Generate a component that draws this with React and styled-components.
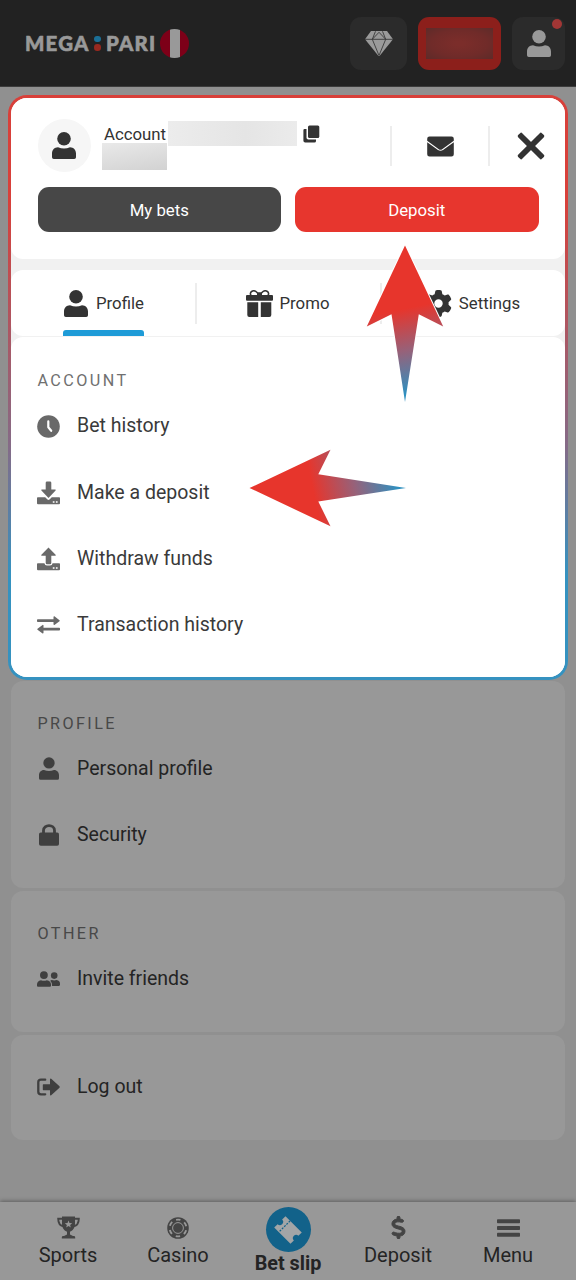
import React from "react";
import styled, { createGlobalStyle } from "styled-components";
import { FaGear, FaDollarSign } from "react-icons/fa6";

//Icons

const UserIcon = ({ w = 24, h = 27 }) => (
    <svg width={w} height={h} viewBox="0 0 24 27" fill="currentColor">
        <circle cx="12" cy="6.8" r="6.8" />
        <path d="M6 15.2C8 16 10 16.4 12 16.4S16 16 18 15.2C21.6 15.2 24 18 24 21.4V25.2A1.8 1.8 0 0 1 22.2 27H1.8A1.8 1.8 0 0 1 0 25.2V21.4C0 18 2.4 15.2 6 15.2Z" />
    </svg>
);

const GemIcon = () => (
    <svg width="28" height="25" viewBox="0 0 28 25">
        <path d="M6 0H22L28 8.2L14.5 25H13.5L0 8.2Z" fill="#9a9a9a" />
        <path
            d="M0 8.3H28M10.5 0.3L7.3 8.3L14 24.5L20.7 8.3L17.5 0.3M7.3 8.3L14 1.3L20.7 8.3"
            fill="none"
            stroke="#3a3a3a"
            strokeWidth="0.9"
        />
    </svg>
);

const CopyIcon = () => (
    <svg width="17" height="18" viewBox="0 0 17 18" fill="#333">
        <rect x="5" y="0.5" width="11.3" height="12.5" rx="1.5" />
        <path d="M1.6 4H3.5V12.8A1.8 1.8 0 0 0 5.3 14.6H13V16A1.6 1.6 0 0 1 11.4 17.6H2.2A1.8 1.8 0 0 1 0.4 15.8V5.2A1.2 1.2 0 0 1 1.6 4Z" />
    </svg>
);

const MailIcon = () => (
    <svg width="27" height="21" viewBox="0 0 27 21" fill="#333">
        <path d="M2.5 0.5H24.5A2.3 2.3 0 0 1 26.8 2.8V4.7L15.2 13.2C14.2 14 12.8 14 11.8 13.2L0.2 4.7V2.8A2.3 2.3 0 0 1 2.5 0.5Z" />
        <path d="M0.2 6.2L11 14C12.5 15.1 14.5 15.1 16 14L26.8 6.2V18.2A2.3 2.3 0 0 1 24.5 20.5H2.5A2.3 2.3 0 0 1 0.2 18.2Z" />
    </svg>
);

const CloseIcon = () => (
    <svg width="28" height="28" viewBox="0 0 28 28" fill="#333">
        <g transform="rotate(45 14 14)">
            <rect x="-2.8" y="11.1" width="33.6" height="5.8" rx="1.5" />
            <rect x="11.1" y="-2.8" width="5.8" height="33.6" rx="1.5" />
        </g>
    </svg>
);

const GiftIcon = () => (
    <svg width="27" height="27" viewBox="0 0 27 27" fill="#333">
        <rect x="0" y="4.9" width="27" height="5.8" rx="1" />
        <path d="M1.3 12.2H12.2V27H3.3A2 2 0 0 1 1.3 25ZM14.8 12.2H25.3V25A2 2 0 0 1 23.3 27H14.8Z" />
        <path
            d="M12.8 5.3C11.5 1.5 8.3 0 6 1.2C3.8 2.5 4 5 5.5 6M14.2 5.3C15.5 1.5 18.7 0 21 1.2C23.2 2.5 23 5 21.5 6"
            fill="none"
            stroke="#333"
            strokeWidth="1.6"
        />
        <rect x="11" y="2.2" width="5" height="4" rx="1.5" />
    </svg>
);

const ClockIcon = () => (
    <svg width="23" height="23" viewBox="0 0 23 23">
        <circle cx="11.5" cy="11.5" r="11.3" fill="currentColor" />
        <path
            d="M11.3 6.4V12.2L14.2 15.8"
            fill="none"
            stroke="#fff"
            strokeWidth="2.2"
            strokeLinecap="round"
            strokeLinejoin="round"
        />
    </svg>
);

const TrayIcon = ({ up }) => (
    <svg width="23" height="24" viewBox="0 0 23 24" fill="currentColor">
        {up ? (
            <path d="M11.5 0.4L18.6 7.8A0.6 0.6 0 0 1 18.2 8.8H14.3V16A1.3 1.3 0 0 1 13 17.2H10A1.3 1.3 0 0 1 8.7 16V8.8H4.8A0.6 0.6 0 0 1 4.4 7.8Z" />
        ) : (
            <path d="M10 0.4H13A1.3 1.3 0 0 1 14.3 1.7V8.4H18.2A0.6 0.6 0 0 1 18.6 9.4L11.5 17L4.4 9.4A0.6 0.6 0 0 1 4.8 8.4H8.7V1.7A1.3 1.3 0 0 1 10 0.4Z" />
        )}
        <path
            d={
                up
                    ? "M1 16.2H7.4A2.8 2.8 0 0 0 10 18.5H13A2.8 2.8 0 0 0 15.6 16.2H22A0.9 0.9 0 0 1 23 17.1V22.3A1 1 0 0 1 22 23.3H1A1 1 0 0 1 0 22.3V17.1A0.9 0.9 0 0 1 1 16.2Z"
                    : "M1 16.2H8.2L10.5 18.5Q11.5 19.3 12.5 18.5L14.8 16.2H22A0.9 0.9 0 0 1 23 17.1V22.3A1 1 0 0 1 22 23.3H1A1 1 0 0 1 0 22.3V17.1A0.9 0.9 0 0 1 1 16.2Z"
            }
        />
        <path d="M15.8 20.2H17.5V21.8H15.8ZM18.9 20.2H20.6V21.8H18.9Z" fill="#fff" />
    </svg>
);

const SwapIcon = () => (
    <svg width="23" height="18" viewBox="0 0 23 18" fill="currentColor">
        <path d="M0.8 3.3H16.5V0.7Q16.8 0.1 17.4 0.3L22.5 4.2Q23 4.7 22.5 5.2L17.4 9Q16.8 9.2 16.5 8.6V6H0.8Q0 6 0 5.2V4.1Q0 3.3 0.8 3.3Z" />
        <path d="M22.2 11.8H6.5V9.3Q6.2 8.7 5.6 8.9L0.5 12.7Q0 13.2 0.5 13.7L5.6 17.5Q6.2 17.7 6.5 17.1V14.6H22.2Q23 14.6 23 13.8V12.6Q23 11.8 22.2 11.8Z" />
    </svg>
);

const LockIcon = () => (
    <svg width="20" height="22" viewBox="0 0 20 22" fill="currentColor">
        <path
            d="M4.5 10V6.5C4.5 0 15.5 0 15.5 6.5V10"
            fill="none"
            stroke="currentColor"
            strokeWidth="2.8"
        />
        <rect x="0" y="8.5" width="20" height="13.2" rx="1.8" />
    </svg>
);

const FriendsIcon = () => (
    <svg width="23" height="16" viewBox="0 0 23 16" fill="currentColor">
        <circle cx="6.9" cy="4.1" r="3.9" />
        <circle cx="17.2" cy="4.6" r="3.3" />
        <path d="M4 9.2Q6.9 10.4 9.8 9.2Q14 9.8 14 13.6V14.7Q14 15.8 13 15.8H1Q0 15.8 0 14.7V13.6Q0 9.8 4 9.2Z" />
        <path d="M14.8 9.1Q17.2 10 19.6 9.1Q23 9.6 23 12.8V13.8Q23 14.9 22 14.9H15.1Q15.4 11.8 13.2 9.8Q14 9.1 14.8 9.1Z" />
    </svg>
);

const LogoutIcon = () => (
    <svg width="23" height="18" viewBox="0 0 23 18" fill="currentColor">
        <path
            d="M8.2 1.7H4Q1.3 1.7 1.3 4.3V13.7Q1.3 16.3 4 16.3H8.2"
            fill="none"
            stroke="currentColor"
            strokeWidth="2.3"
            strokeLinecap="round"
        />
        <path d="M6.4 6.3H13V1.2Q13.3 0.3 14.2 0.8L22.5 8.3Q23 9 22.5 9.7L14.2 17.2Q13.3 17.7 13 16.8V12.2H6.4Q5.8 12.2 5.8 11.5V7Q5.8 6.3 6.4 6.3Z" />
    </svg>
);

const TrophyIcon = () => (
    <svg width="23" height="23" viewBox="0 0 23 23" fill="currentColor">
        <path d="M5 0.5H18V7.8C18 12 15.5 15 13 15.7V18.5L16 20H17.2Q18.2 20.4 18.2 21.6V22.6H4.8V21.6Q4.8 20.4 5.8 20H7L10 18.5V15.7C7.5 15 5 12 5 7.8Z" />
        <path
            d="M5.5 2.7H1.2C1.2 7.5 3.5 10 7 10.4M17.5 2.7H21.8C21.8 7.5 19.5 10 16 10.4"
            fill="none"
            stroke="currentColor"
            strokeWidth="1.9"
        />
        <path
            d="M11.5 4.5L12.5 7.1L15.2 7.2L13.1 8.9L13.8 11.5L11.5 10L9.2 11.5L9.9 8.9L7.8 7.2L10.5 7.1Z"
            fill="#989898"
        />
    </svg>
);

const ChipIcon = () => (
    <svg width="22" height="22" viewBox="0 0 22 22">
        <circle cx="11" cy="11" r="10.8" fill="currentColor" />
        <circle
            cx="11"
            cy="11"
            r="8.4"
            fill="none"
            stroke="#989898"
            strokeWidth="1.9"
            strokeDasharray="4.4 4.4"
            strokeDashoffset="-2.2"
        />
        <circle cx="11" cy="11" r="5.4" fill="none" stroke="#989898" strokeWidth="1" />
    </svg>
);

const TicketIcon = () => (
    <svg width="30" height="30" viewBox="0 0 30 30">
        <g transform="rotate(45 15 15)">
            <path
                d="M3.5 7H26.5V11.8A3.2 3.2 0 0 0 26.5 18.2V23H3.5V18.2A3.2 3.2 0 0 0 3.5 11.8Z"
                fill="#a2a5a7"
            />
            <path d="M10 7V23" stroke="#12628a" strokeWidth="1.2" strokeDasharray="2 1.2" />
        </g>
    </svg>
);

const BarsIcon = () => (
    <svg width="23" height="18" viewBox="0 0 23 18" fill="currentColor">
        <rect y="0.2" width="23" height="4" rx="0.8" />
        <rect y="7" width="23" height="4" rx="0.8" />
        <rect y="13.8" width="23" height="4" rx="0.8" />
    </svg>
);

const ArrowShape = ({ id }) => (
    <svg width="78" height="158" viewBox="0 0 78 158">
        <defs>
            <linearGradient
                id={id}
                gradientUnits="userSpaceOnUse"
                x1="37"
                y1="64"
                x2="54"
                y2="146"
            >
                <stop offset="0" stopColor="#e7352c" />
                <stop offset="0.5" stopColor="#96627a" />
                <stop offset="1" stopColor="#2f90c0" />
            </linearGradient>
        </defs>
        <path
            d="M39 0.5L77.2 81.5L52.8 69.3L39 157L25.5 69.3L0.8 81.5Z"
            fill={`url(#${id})`}
            stroke="#fff"
            strokeWidth="2"
            paintOrder="stroke"
        />
    </svg>
);

const accountItems = [
    { icon: <ClockIcon />, text: "Bet history" },
    { icon: <TrayIcon />, text: "Make a deposit" },
    { icon: <TrayIcon up />, text: "Withdraw funds" },
    { icon: <SwapIcon />, text: "Transaction history" },
];

const profileItems = [
    { icon: <UserIcon w={20} h={23} />, text: "Personal profile" },
    { icon: <LockIcon />, text: "Security" },
];

function Menu({ items, dim }) {
    return items.map((item) => (
        <Item key={item.text} $dim={dim}>
            <ItemIcon $dim={dim}>{item.icon}</ItemIcon>
            <span>{item.text}</span>
        </Item>
    ));
}

function App() {
    return (
        <Page>
            <GlobalStyle />
            <Header>
                <Logo>
                    <Word $width={65}>MEGA</Word>
                    <Dots>
                        <Dot $color="#1b6f96" />
                        <Dot $color="#98291f" />
                    </Dots>
                    <Word $width={52}>PARI</Word>
                    <Flag />
                </Logo>
                <HeaderButton $width={57}>
                    <GemIcon />
                </HeaderButton>
                <HeaderButton $width={83} $red>
                    <Balance />
                </HeaderButton>
                <HeaderButton $width={53}>
                    <UserIcon w={24} h={27} />
                    <Notice />
                </HeaderButton>
            </Header>

            <Panel>
                <PanelInner>
                    <AccountCard>
                        <AccountTop>
                            <Avatar>
                                <UserIcon />
                            </Avatar>
                            <AccountInfo>
                                <AccountLine>
                                    <span>Account</span>
                                    <HiddenNumber />
                                    <CopyIcon />
                                </AccountLine>
                                <HiddenSum />
                            </AccountInfo>
                            <MailCell>
                                <MailIcon />
                            </MailCell>
                            <CloseIcon />
                        </AccountTop>
                        <Buttons>
                            <Button>My bets</Button>
                            <Button $red>Deposit</Button>
                        </Buttons>
                    </AccountCard>

                    <Tabs>
                        <Tab>
                            <TabLabel $active>
                                <UserIcon />
                                <span>Profile</span>
                            </TabLabel>
                        </Tab>
                        <Tab $shift={4}>
                            <TabLabel>
                                <GiftIcon />
                                <span>Promo</span>
                            </TabLabel>
                        </Tab>
                        <Tab $shift={2}>
                            <TabLabel>
                                <FaGear size={27} />
                                <span>Settings</span>
                            </TabLabel>
                        </Tab>
                    </Tabs>

                    <AccountSection $top={33}>
                        <Title>ACCOUNT</Title>
                        <Menu items={accountItems} />
                    </AccountSection>
                </PanelInner>
                <ArrowUp>
                    <ArrowShape id="arrowUp" />
                </ArrowUp>
                <ArrowLeft>
                    <ArrowShape id="arrowLeft" />
                </ArrowLeft>
            </Panel>

            <Sections>
                <Section $height={207}>
                    <Title $dim>PROFILE</Title>
                    <Menu items={profileItems} dim />
                </Section>
                <Section $height={141}>
                    <Title $dim>OTHER</Title>
                    <Menu items={[{ icon: <FriendsIcon />, text: "Invite friends" }]} dim />
                </Section>
                <Section $height={105} $top={18}>
                    <Menu items={[{ icon: <LogoutIcon />, text: "Log out" }]} dim />
                </Section>
            </Sections>

            <Nav>
                <NavItem>
                    <NavIcon>
                        <TrophyIcon />
                    </NavIcon>
                    <span>Sports</span>
                </NavItem>
                <NavItem>
                    <NavIcon>
                        <ChipIcon />
                    </NavIcon>
                    <span>Casino</span>
                </NavItem>
                <NavItem $main>
                    <Circle>
                        <TicketIcon />
                    </Circle>
                    <span>Bet slip</span>
                </NavItem>
                <NavItem>
                    <NavIcon>
                        <FaDollarSign size={23} stroke="currentColor" strokeWidth={22} />
                    </NavIcon>
                    <span>Deposit</span>
                </NavItem>
                <NavItem>
                    <NavIcon>
                        <BarsIcon />
                    </NavIcon>
                    <span>Menu</span>
                </NavItem>
            </Nav>
        </Page>
    );
}

export default App;

const GlobalStyle = createGlobalStyle`
    * {
        box-sizing: border-box;
    }
    body {
        margin: 0;
        background: #909090;
    }
    svg {
        display: block;
        flex-shrink: 0;
    }
`;
const Page = styled.div`
    width: 576px;
    height: 1280px;
    display: flex;
    flex-direction: column;
    overflow: hidden;
    background: #909090;
    color: #333;
    font-family: Roboto, sans-serif;
`;
const Header = styled.header`
    height: 87px;
    flex-shrink: 0;
    display: flex;
    align-items: center;
    gap: 11px;
    padding: 0 11px 0 25px;
    background: #222;
    border-bottom: 1px solid #3c3c3c;
`;
const Logo = styled.div`
    flex: 1;
    display: flex;
    align-items: center;
`;
const Word = styled.span`
    width: ${({ $width }) => $width}px;
    color: #999;
    font-family: Lato, sans-serif;
    font-size: 20.4px;
    font-weight: 900;
    line-height: 24px;
    letter-spacing: 1.2px;
    -webkit-text-stroke: 0.6px #999;
`;
const Dots = styled.div`
    display: flex;
    flex-direction: column;
    gap: 2px;
    width: 7px;
    margin: 0 5px 0 4px;
`;
const Dot = styled.i`
    width: 6.5px;
    height: 6.5px;
    border-radius: 50%;
    background: ${({ $color }) => $color};
`;
const Flag = styled.div`
    width: 29px;
    height: 29px;
    margin-left: 2px;
    border-radius: 50%;
    background: linear-gradient(
        90deg,
        #7d0018 0 9.5px,
        #999 9.5px 19.5px,
        #7d0018 19.5px
    );
`;
const HeaderButton = styled.div`
    position: relative;
    width: ${({ $width }) => $width}px;
    height: 53px;
    display: flex;
    align-items: center;
    justify-content: center;
    border-radius: 11px;
    color: #999;
    background: ${({ $red }) => ($red ? "#8c1f1b" : "#2b2b2b")};
`;
const Balance = styled.div`
    width: 67px;
    height: 31px;
    background: radial-gradient(ellipse, #7b2d2a 10%, #702b29 60%, #5d2b29 100%);
`;
const Notice = styled.i`
    position: absolute;
    top: 2px;
    right: 3px;
    width: 10px;
    height: 10px;
    border-radius: 50%;
    background: #a23635;
`;
const Panel = styled.main`
    position: relative;
    flex-shrink: 0;
    width: 560px;
    height: 585px;
    margin: 8px 8px 0;
    padding: 3px;
    border-radius: 19px;
    background: linear-gradient(180deg, #d8403a 0 18%, #856b87 60%, #3592c0 82%);
`;
const PanelInner = styled.div`
    height: 100%;
    border-radius: 16px;
    overflow: hidden;
    background: #f1f1f1;
`;
const AccountCard = styled.div`
    height: 161px;
    padding: 20px 26.5px 0;
    border-radius: 0 0 12px 12px;
    background: #fff;
`;
const AccountTop = styled.div`
    display: flex;
    align-items: center;
    height: 55px;
    margin-right: -6.5px;
`;
const Avatar = styled.div`
    width: 53px;
    height: 53px;
    display: flex;
    align-items: center;
    justify-content: center;
    border-radius: 50%;
    background: #f6f6f6;
`;
const AccountInfo = styled.div`
    flex: 1;
    padding-left: 11.5px;
`;
const AccountLine = styled.div`
    display: flex;
    align-items: center;
    height: 25px;
    font-size: 16.8px;

    span {
        width: 66px;
        padding-left: 2px;
    }
    svg {
        margin-left: 5.5px;
    }
`;
const HiddenNumber = styled.div`
    width: 129px;
    height: 25px;
    background: linear-gradient(90deg, #ececec, #e5e5e5 60%, #ebebeb);
`;
const HiddenSum = styled.div`
    width: 65px;
    height: 27px;
    margin-top: -3px;
    background: linear-gradient(170deg, #e9e9e9, #d2d2d2);
`;
const MailCell = styled.div`
    width: 100px;
    height: 40px;
    display: flex;
    align-items: center;
    justify-content: center;
    margin-right: 27px;
    border-left: 2px solid #ededed;
    border-right: 2px solid #ededed;

    svg {
        position: relative;
        top: 0.5px;
    }
`;
const Buttons = styled.div`
    display: grid;
    grid-template-columns: 1fr 1fr;
    gap: 14px;
    margin-top: 14px;
`;
const Button = styled.div`
    height: 45px;
    display: flex;
    align-items: center;
    justify-content: center;
    border-radius: 11px;
    color: #fff;
    font-size: 16.8px;
    background: ${({ $red }) => ($red ? "#e7362e" : "#474747")};
`;
const Tabs = styled.div`
    display: grid;
    grid-template-columns: 186px 185px 183px;
    height: 66px;
    margin-top: 11px;
    border-radius: 12px;
    background: #fff;
`;
const Tab = styled.div`
    display: flex;
    justify-content: center;
    padding-right: ${({ $shift = 0 }) => $shift}px;
    background: linear-gradient(#ededed, #ededed) right 13px / 2px 41px no-repeat;

    &:last-child {
        background: none;
    }
`;
const TabLabel = styled.div`
    position: relative;
    display: flex;
    align-items: center;
    gap: ${({ $active }) => ($active ? 8 : 7)}px;
    height: 66px;
    font-size: 16.8px;

    &::after {
        content: "";
        display: ${({ $active }) => ($active ? "block" : "none")};
        position: absolute;
        left: -1px;
        right: 0;
        bottom: 0;
        height: 6px;
        border-radius: 3px 3px 0 0;
        background: #1e9bd7;
    }
`;
const Section = styled.section`
    height: ${({ $height }) => $height}px;
    padding: ${({ $top = 32 }) => $top}px 26.5px 0;
    border-radius: 12px;
    background: #989898;
`;
const AccountSection = styled(Section)`
    height: 341px;
    margin-top: 1px;
    background: #fff;
`;
const Title = styled.h2`
    margin: 0 0 ${({ $dim }) => ($dim ? 1 : 1.5)}px;
    font-size: 16.2px;
    font-weight: 400;
    line-height: 21px;
    letter-spacing: 2.4px;
    color: ${({ $dim }) => ($dim ? "#484848" : "#707070")};
`;
const Item = styled.div`
    height: 66.4px;
    display: flex;
    align-items: center;
    font-size: 19.5px;
    color: ${({ $dim }) => ($dim ? "#242424" : "#3a3a3a")};
`;
const ItemIcon = styled.div`
    width: 23px;
    display: flex;
    justify-content: center;
    margin-left: -0.5px;
    margin-right: 17px;
    color: ${({ $dim }) => ($dim ? "#3f3f3f" : "#696969")};

    svg {
        position: relative;
        top: 0.5px;
    }
`;
const ArrowUp = styled.div`
    position: absolute;
    left: 358px;
    top: 149.5px;
`;
const ArrowLeft = styled.div`
    position: absolute;
    left: 280.5px;
    top: 314px;
    transform: rotate(-90deg);
`;
const Sections = styled.div`
    flex: 1;
    display: flex;
    flex-direction: column;
    gap: 3px;
    margin: 1px 11px 0;
`;
const Nav = styled.nav`
    height: 78px;
    flex-shrink: 0;
    display: grid;
    grid-template-columns: repeat(5, 110px);
    justify-content: center;
    background: #989898;
    box-shadow: 0 -1px 4px rgba(0, 0, 0, 0.35);
`;
const NavItem = styled.div`
    display: flex;
    flex-direction: column;
    align-items: center;
    padding-top: ${({ $main }) => ($main ? 5 : 14)}px;
    font-size: ${({ $main }) => ($main ? 19.8 : 20)}px;
    font-weight: ${({ $main }) => ($main ? 700 : 400)};
    line-height: 24px;
    color: #242424;
`;
const NavIcon = styled.div`
    height: 23px;
    display: flex;
    align-items: center;
    margin-bottom: 4px;
    color: #444;
`;
const Circle = styled.div`
    width: 45px;
    height: 45px;
    display: flex;
    align-items: center;
    justify-content: center;
    border-radius: 50%;
    background: #12628a;
`;
